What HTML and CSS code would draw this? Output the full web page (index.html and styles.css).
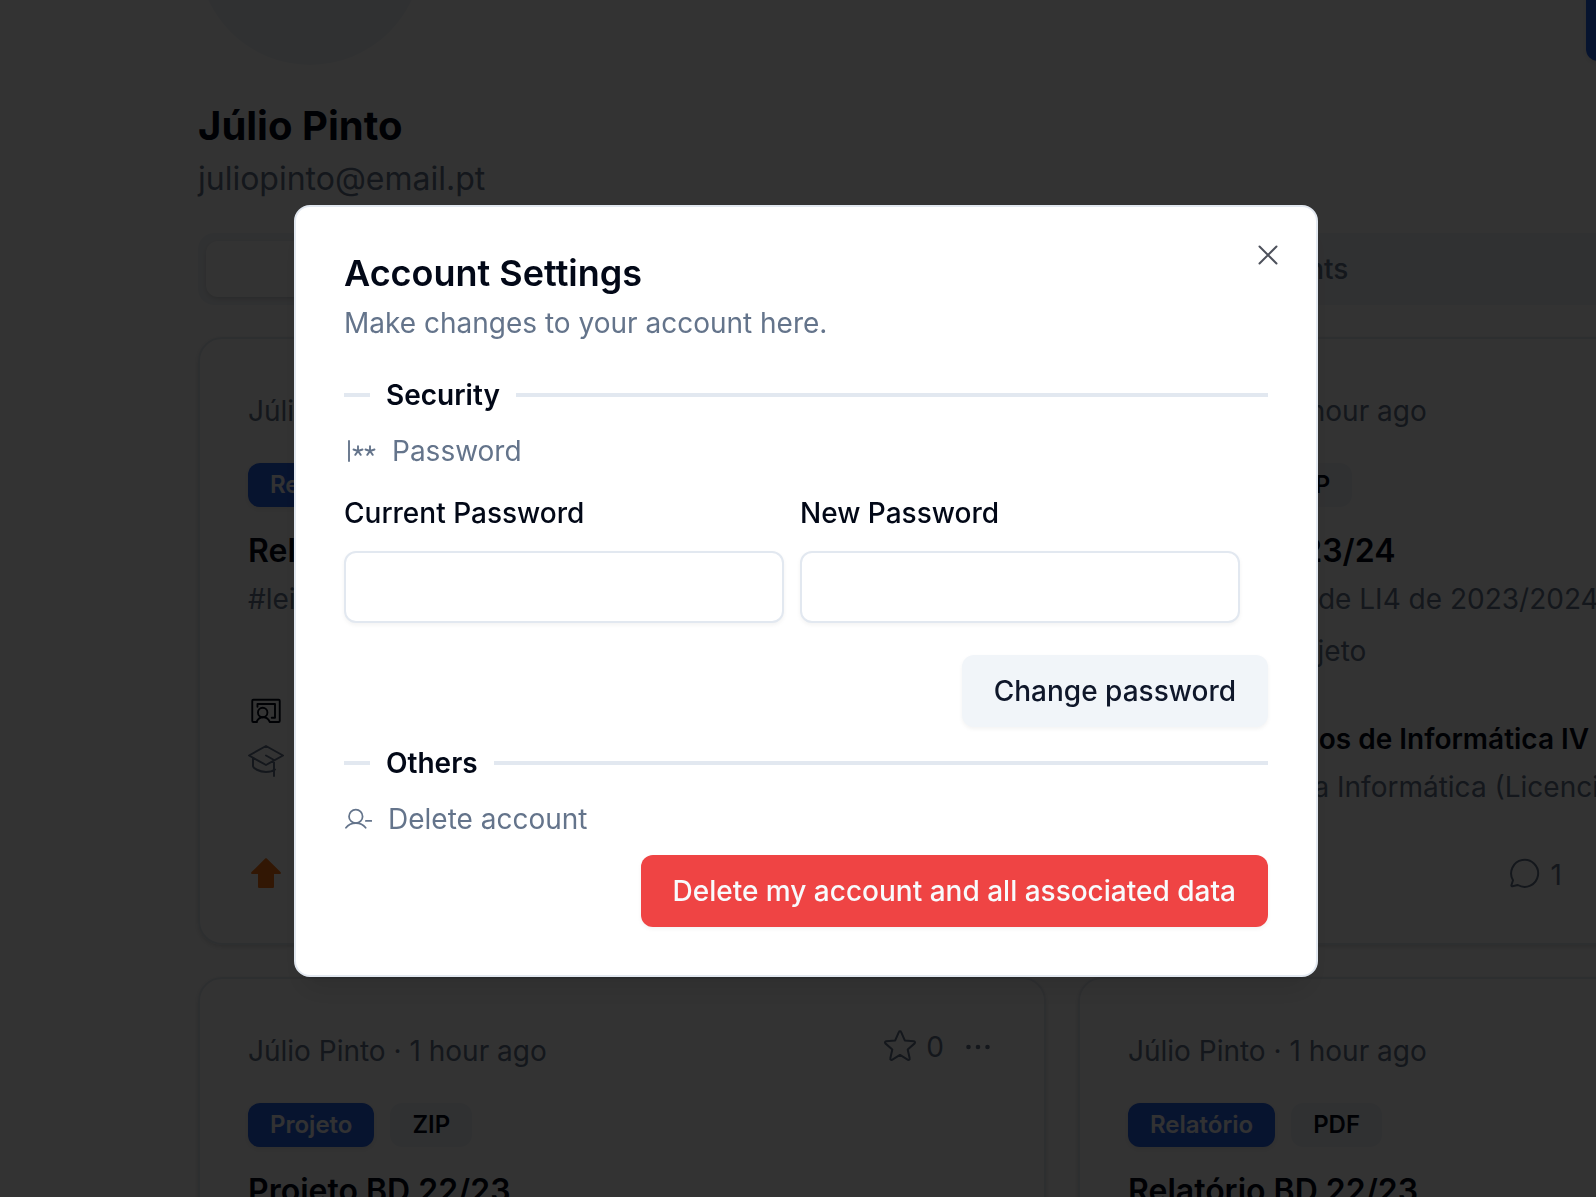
FILE: index.html
```html
<!DOCTYPE html>
<html lang="en">
<head>
<meta charset="utf-8">
<meta name="viewport" content="width=device-width, initial-scale=1">
<title>Account Settings</title>
<link rel="stylesheet" href="styles.css">
</head>
<body>
<svg class="sprite" aria-hidden="true">
  <symbol id="i-star" viewBox="4 8 248 248"><path d="M128 24c4 0 7 2 8 5l25 58 63 6c7 1 10 9 5 14l-48 42 14 62c2 7-6 12-12 9l-55-33-55 33c-6 3-14-2-12-9l14-62-48-42c-5-5-2-13 5-14l63-6 25-58c1-3 4-5 8-5Z"/></symbol>
  <symbol id="i-dots" viewBox="0 0 36 36"><g fill="currentColor" stroke="none"><circle cx="8.500" cy="18" r="2.300"/><circle cx="18" cy="18" r="2.300"/><circle cx="27.500" cy="18" r="2.300"/></g></symbol>
  <symbol id="i-teacher" viewBox="-1 1 38 38"><path d="M8.500 29.500H4.500a1 1 0 0 1-1-1V7a1 1 0 0 1 1-1h27a1 1 0 0 1 1 1v21.500a1 1 0 0 1-1 1H22M9 13.500V10.500h18.500v14.500H24M8 29.500c1.300-3 3.900-5 7-5s5.700 2 7 5"/><circle cx="14.500" cy="19.500" r="5"/></symbol>
  <symbol id="i-cap" viewBox="0 0 36 36"><path d="M1 12.500 18 3l17 9.500L18 22ZM5 15v8c0 2 6 6 13 6 4 0 7-1 9-2.500M18 12.500l8 4.500v16"/></symbol>
  <symbol id="i-up" viewBox="0 0 36 36"><path fill="currentColor" stroke="none" d="m17.200 3.600-13.700 13.500c-.8.900-.3 2 .8 2H10V31.500c0 1 .6 1.500 1.500 1.500h13c.9 0 1.500-.5 1.500-1.500V19.100h5.700c1.100 0 1.600-1.100.8-2L18.800 3.600c-.5-.5-1.100-.5-1.600 0Z"/></symbol>
  <symbol id="i-chat" viewBox="0 0 36 36"><path d="M6 25.200A13.500 13.500 0 1 1 10.800 30L5.500 31.300a.9.900 0 0 1-1.100-1.100Z"/></symbol>
  <symbol id="i-password" viewBox="0 0 256 256"><path d="M40 48v160M112 128V90m0 38 36-12m-36 12 22 31m-22-31-22 31m22-31-36-12M208 128V90m0 38 36-12m-36 12 22 31m-22-31-22 31m22-31-36-12"/></symbol>
  <symbol id="i-user-minus" viewBox="0 0 256 256"><circle cx="108" cy="104" r="62"/><path d="M18 208c20-26 52-42 90-42s70 16 90 42M200 146h52"/></symbol>
  <symbol id="i-close" viewBox="0 0 32 32"><path d="m7.500 7.500 17 17M24.500 7.500l-17 17"/></symbol>
</svg>

<div class="page">
  <header class="profile">
    <div class="profile-info">
      <div class="avatar"></div>
      <h1 class="name">Júlio Pinto</h1>
      <p class="email">juliopinto@email.pt</p>
    </div>
    <button class="profile-action" type="button" aria-label="Edit profile"></button>
  </header>

  <div class="tabs" role="tablist">
    <button class="tab tab-active" type="button" role="tab" aria-selected="true" aria-label="Posts"></button>
    <button class="tab" type="button" role="tab" aria-label="Starred"></button>
    <button class="tab" type="button" role="tab">Comments</button>
    <button class="tab" type="button" role="tab" aria-label="Drafts"></button>
  </div>

  <main class="cards">
    <article class="card">
      <div class="card-head">
        <p class="author">Júlio Pinto · 1 hour ago</p>
        <div class="card-tools"><svg class="icon icon-star"><use href="#i-star"/></svg><span>0</span><svg class="icon icon-dots"><use href="#i-dots"/></svg></div>
      </div>
      <div class="badges"><span class="badge badge-primary">Relatório</span><span class="badge">PDF</span></div>
      <h2 class="card-title">Relatório LI4 23/24</h2>
      <p class="text">#lei #li4</p>
      <div class="meta meta-compact">
        <svg class="icon icon-dark"><use href="#i-teacher"/></svg><p></p>
        <svg class="icon"><use href="#i-cap"/></svg><p></p>
      </div>
      <footer class="card-foot"><svg class="icon icon-up"><use href="#i-up"/></svg></footer>
    </article>

    <article class="card">
      <div class="card-head">
        <p class="author">Júlio Pinto · 1 hour ago</p>
        <div class="card-tools"><svg class="icon icon-star"><use href="#i-star"/></svg><span>0</span><svg class="icon icon-dots"><use href="#i-dots"/></svg></div>
      </div>
      <div class="badges"><span class="badge badge-primary">Projeto</span><span class="badge">ZIP</span></div>
      <h2 class="card-title">Projeto LI4 23/24</h2>
      <p class="text">Projeto global de LI4 de 2023/2024</p>
      <p class="text text-tags">#lei #dss #projeto</p>
      <div class="meta">
        <svg class="icon icon-dark"><use href="#i-teacher"/></svg><p class="subject">Laboratórios de Informática IV</p>
        <svg class="icon"><use href="#i-cap"/></svg><p>Engenharia Informática (Licenciatura)</p>
      </div>
      <footer class="card-foot">
        <svg class="icon icon-up"><use href="#i-up"/></svg>
        <span class="comments"><svg class="icon"><use href="#i-chat"/></svg><span>1</span></span>
      </footer>
    </article>

    <article class="card">
      <div class="card-head">
        <p class="author">Júlio Pinto · 1 hour ago</p>
        <div class="card-tools"><svg class="icon icon-star"><use href="#i-star"/></svg><span>0</span><svg class="icon icon-dots"><use href="#i-dots"/></svg></div>
      </div>
      <div class="badges"><span class="badge badge-primary">Projeto</span><span class="badge">ZIP</span></div>
      <h2 class="card-title">Projeto BD 22/23</h2>
    </article>

    <article class="card">
      <div class="card-head">
        <p class="author">Júlio Pinto · 1 hour ago</p>
        <div class="card-tools"><svg class="icon icon-star"><use href="#i-star"/></svg><span>0</span><svg class="icon icon-dots"><use href="#i-dots"/></svg></div>
      </div>
      <div class="badges"><span class="badge badge-primary">Relatório</span><span class="badge">PDF</span></div>
      <h2 class="card-title">Relatório BD 22/23</h2>
    </article>
  </main>
</div>

<div class="overlay">
  <section class="dialog" role="dialog" aria-modal="true" aria-labelledby="dialog-title">
    <button class="close" type="button" aria-label="Close"><svg class="icon-close"><use href="#i-close"/></svg></button>
    <h2 class="dialog-title" id="dialog-title">Account Settings</h2>
    <p class="dialog-text">Make changes to your account here.</p>

    <h3 class="divider">Security</h3>
    <p class="row"><svg class="icon-password"><use href="#i-password"/></svg>Password</p>
    <form>
      <div class="fields">
        <div class="field"><label for="current">Current Password</label><input id="current" type="password"></div>
        <div class="field"><label for="new">New Password</label><input id="new" type="password"></div>
      </div>
      <div class="actions"><button class="button button-secondary" type="submit">Change password</button></div>
    </form>

    <h3 class="divider divider-others">Others</h3>
    <p class="row"><svg class="icon-user"><use href="#i-user-minus"/></svg>Delete account</p>
    <div class="actions actions-delete"><button class="button button-danger" type="button">Delete my account and all associated data</button></div>
  </section>
</div>
</body>
</html>
```
FILE: styles.css
```css
:root {
  --foreground: #020817;
  --muted: #64748b;
  --border: #e2e8f0;
  --soft: #f1f5f9;
  --primary: #2563eb;
}

* { box-sizing: border-box; }

html, body { height: 100%; }

body {
  margin: 0;
  overflow: hidden;
  background: #fff;
  color: var(--foreground);
  font-family: Inter, "Liberation Sans", sans-serif;
  font-size: 28px;
  line-height: 40px;
  font-optical-sizing: none;
}

h1, h2, h3, p { margin: 0; }

button, input { font: inherit; color: inherit; }

svg {
  flex: none;
  fill: none;
  stroke: currentColor;
  stroke-linecap: round;
  stroke-linejoin: round;
}

.sprite { display: none; }

/* Profile page */
.page {
  width: calc(100% + 330px);
  margin-top: -159px;
  padding-left: 198px;
}

.profile {
  display: flex;
  justify-content: space-between;
  align-items: flex-start;
}

.avatar {
  width: 224px;
  height: 224px;
  margin-bottom: 32px;
  border-radius: 50%;
  background: var(--soft);
}

.name {
  font-size: 40px;
  line-height: 58px;
  font-weight: 700;
}

.email {
  font-size: 32px;
  line-height: 48px;
  color: var(--muted);
}

.profile-action {
  width: 340px;
  height: 72px;
  margin-top: 148px;
  border: 0;
  border-radius: 12px;
  background: var(--primary);
  box-shadow: 0 2px 6px rgba(0, 0, 0, .1);
}

.tabs {
  display: flex;
  margin: 30px 0 32px;
  padding: 8px;
  border-radius: 16px;
  background: var(--soft);
}

.tab {
  flex: 1;
  height: 56px;
  border: 0;
  border-radius: 12px;
  background: none;
  color: var(--muted);
  font-weight: 500;
}

.tab-active {
  background: #fff;
  color: var(--foreground);
  box-shadow: 0 2px 6px rgba(0, 0, 0, .1), 0 2px 4px -2px rgba(0, 0, 0, .1);
}

.cards {
  display: grid;
  grid-template-columns: 1fr 1fr;
  gap: 32px;
}

.card {
  display: flex;
  flex-direction: column;
  padding: 48px;
  border: 2px solid var(--border);
  border-radius: 24px;
  color: var(--muted);
  box-shadow: 0 2px 6px rgba(0, 0, 0, .1), 0 2px 4px -2px rgba(0, 0, 0, .1);
}

.card-head {
  display: flex;
  justify-content: space-between;
  height: 76px;
}

.author { padding-top: 4px; }

.card-tools {
  display: flex;
  height: 40px;
  align-items: center;
  gap: 8px;
}

.icon {
  width: 36px;
  height: 36px;
  stroke-width: 2px;
}

.icon-star { stroke-width: 14px; }

.icon-dots { margin-left: 8px; }

.icon-dark { color: var(--foreground); }

.icon-up { color: #f97316; }

.badges {
  display: flex;
  gap: 16px;
}

.badge {
  padding: 4px 20px;
  border: 2px solid transparent;
  border-radius: 12px;
  background: var(--soft);
  color: var(--foreground);
  font-size: 24px;
  line-height: 32px;
  font-weight: 600;
}

.badge-primary {
  background: var(--primary);
  color: #f8fafc;
  box-shadow: 0 2px 6px rgba(0, 0, 0, .1);
}

.card-title {
  margin: 20px 0 4px;
  color: var(--foreground);
  font-size: 32px;
  line-height: 48px;
  font-weight: 600;
  font-optical-sizing: auto;
}

.text-tags { margin-top: 12px; }

.meta {
  display: grid;
  grid-template-columns: 36px 1fr;
  grid-auto-rows: 40px;
  align-items: center;
  gap: 8px 16px;
  margin-top: 48px;
}

.meta-compact { margin-top: 74px; }

.subject {
  color: var(--foreground);
  font-weight: 600;
}

.card-foot {
  display: flex;
  align-items: flex-start;
  justify-content: space-between;
  height: 40px;
  margin-top: 48px;
}

.meta-compact + .card-foot { margin-top: auto; }

.comments {
  display: flex;
  align-items: flex-start;
  gap: 8px;
  margin-right: 314px;
}

/* Dialog */
.overlay {
  position: fixed;
  inset: 0;
  display: flex;
  align-items: center;
  justify-content: center;
  padding: 0 0 15px 16px;
  background: rgba(0, 0, 0, .8);
}

.dialog {
  position: relative;
  width: 100%;
  max-width: 1024px;
  padding: 48px;
  border: 2px solid var(--border);
  border-radius: 16px;
  background: #fff;
  box-shadow: 0 20px 30px -6px rgba(0, 0, 0, .1), 0 8px 12px -8px rgba(0, 0, 0, .1);
}

.close {
  position: absolute;
  top: 32px;
  right: 32px;
  width: 32px;
  height: 32px;
  padding: 0;
  border: 0;
  background: none;
  opacity: .7;
}

.icon-close {
  display: block;
  width: 32px;
  height: 32px;
  stroke-width: 2px;
}

.dialog-title {
  font-size: 36px;
  line-height: 36px;
  font-weight: 600;
  font-optical-sizing: auto;
}

.dialog-text {
  margin-top: 12px;
  color: var(--muted);
}

.divider {
  display: flex;
  align-items: center;
  gap: 16px;
  margin: 32px 0 16px;
  font-size: 28px;
  font-weight: 600;
}

.divider::before,
.divider::after {
  content: "";
  height: 4px;
  background: var(--border);
}

.divider::before { width: 26px; }

.divider::after { flex: 1; }

.divider-others { margin-top: 16px; }

.row {
  display: flex;
  align-items: center;
  gap: 16px;
  color: var(--muted);
}

.icon-password {
  width: 32px;
  height: 32px;
  stroke-width: 15px;
}

.icon-user {
  width: 28px;
  height: 28px;
  stroke-width: 16px;
}

.fields {
  display: flex;
  gap: 16px;
  margin: 28px 28px 32px 0;
}

.field {
  display: flex;
  flex: 1;
  flex-direction: column;
  gap: 24px;
}

.field label {
  line-height: 28px;
  font-weight: 500;
}

.field input {
  width: 100%;
  height: 72px;
  padding: 8px 24px;
  border: 2px solid var(--border);
  border-radius: 12px;
  background: #fff;
  box-shadow: 0 2px 4px rgba(0, 0, 0, .05);
}

.actions {
  display: flex;
  justify-content: flex-end;
}

.actions-delete { margin-top: 16px; }

.button {
  height: 72px;
  padding: 0 32px;
  border: 0;
  border-radius: 12px;
  font-weight: 500;
  box-shadow: 0 2px 4px rgba(0, 0, 0, .05);
}

.button-secondary {
  background: var(--soft);
  color: #0f172a;
}

.button-danger {
  background: #ef4444;
  color: #f8fafc;
}
```
